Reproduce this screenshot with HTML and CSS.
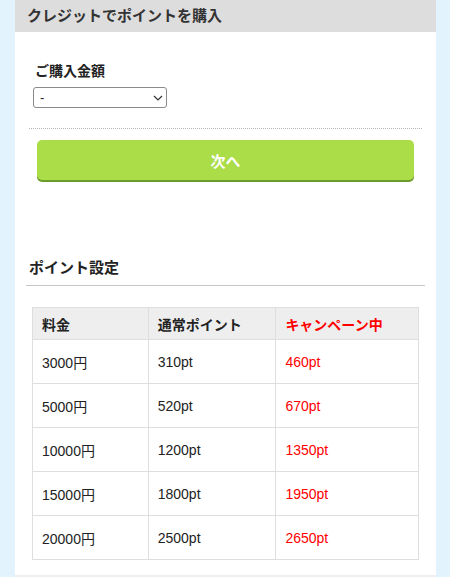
FILE: index.html
```html
<!DOCTYPE html>
<html lang="ja">
<head>
<meta charset="utf-8">
<link rel="stylesheet" href="styles.css">
</head>
<body>
<div class="panel">
  <h1 class="panel-title">クレジットでポイントを購入</h1>
  <div class="form">
    <div class="field-label">ご購入金額</div>
    <div class="select-wrap">
      <select class="select"><option>-</option></select>
      <svg class="chev" width="10" height="6" viewBox="0 0 10 6"><path d="M1 1 L5 5 L9 1" fill="none" stroke="#333" stroke-width="1.2"/></svg>
    </div>
    <div class="dots"></div>
    <button class="next">次へ</button>
  </div>
  <h2 class="section-title">ポイント設定</h2>
  <table class="points">
    <colgroup><col class="c1"><col class="c2"><col class="c3"></colgroup>
    <thead>
      <tr><th>料金</th><th>通常ポイント</th><th class="red">キャンペーン中</th></tr>
    </thead>
    <tbody>
      <tr><td>3000円</td><td>310pt</td><td class="red">460pt</td></tr>
      <tr><td>5000円</td><td>520pt</td><td class="red">670pt</td></tr>
      <tr><td>10000円</td><td>1200pt</td><td class="red">1350pt</td></tr>
      <tr><td>15000円</td><td>1800pt</td><td class="red">1950pt</td></tr>
      <tr><td>20000円</td><td>2500pt</td><td class="red">2650pt</td></tr>
    </tbody>
  </table>
</div>
<div class="next-panel"></div>
</body>
</html>
```
FILE: styles.css
```css
html, body {
  margin: 0;
  padding: 0;
  background: #e2f3fd;
  font-family: "Liberation Sans", "Noto Sans CJK JP", sans-serif;
  color: #222;
}
.panel {
  margin: 0 14px 0 15px;
  background: #fff;
  padding-bottom: 15px;
}
.panel-title {
  margin: 0;
  height: 32px;
  line-height: 31px;
  background: #dddddd;
  padding-left: 12px;
  font-size: 15px;
  font-weight: bold;
  color: #333;
}
.form {
  padding: 29px 14px 0 14px;
}
.field-label {
  margin-left: 6px;
  font-size: 14px;
  font-weight: bold;
  line-height: 20px;
  color: #222;
}
.select-wrap {
  position: relative;
  width: 134px;
  height: 21px;
  margin: 6px 0 0 4px;
}
.select {
  appearance: none;
  -webkit-appearance: none;
  width: 134px;
  height: 21px;
  box-sizing: border-box;
  border: 1px solid #8a8a8a;
  border-radius: 3px;
  background: #fff;
  padding: 0 0 0 6px;
  margin: 0;
  font-family: "Liberation Sans", sans-serif;
  font-size: 13px;
  color: #222;
}
.chev {
  position: absolute;
  right: 4px;
  top: 8px;
  pointer-events: none;
}
.dots {
  margin-top: 20px;
  border-top: 1px dotted #b5b5b5;
}
.next {
  display: block;
  width: 377px;
  height: 40px;
  margin: 11px 0 0 8px;
  border: none;
  border-radius: 5px;
  background: #aadd47;
  box-shadow: 0 2px 0 #6b9b2b;
  color: #fff;
  font-family: "Liberation Sans", "Noto Sans CJK JP", sans-serif;
  font-size: 15px;
  font-weight: bold;
  padding: 0;
}
.section-title {
  margin: 77px 11px 0 11px;
  padding: 0 0 6px 3px;
  font-size: 15px;
  line-height: 22px;
  font-weight: bold;
  color: #222;
  border-bottom: 1px solid #c8c8c8;
}
.points {
  margin: 21px 0 0 17px;
  width: 387px;
  border-collapse: collapse;
  font-size: 14px;
}
.c1 { width: 116px; }
.c2 { width: 128px; }
.c3 { width: 143px; }
.points th, .points td {
  border: 1px solid #dedede;
  text-align: left;
  vertical-align: middle;
  padding: 0 0 0 9px;
}
.points th {
  height: 31px;
  background: #eeeeee;
  font-weight: bold;
  color: #222;
}
.points td {
  height: 43px;
  color: #222;
}
.points .red {
  color: #f00;
}
.next-panel {
  margin: 0 14px 0 15px;
  height: 40px;
  background: #eeeeee;
}
```
